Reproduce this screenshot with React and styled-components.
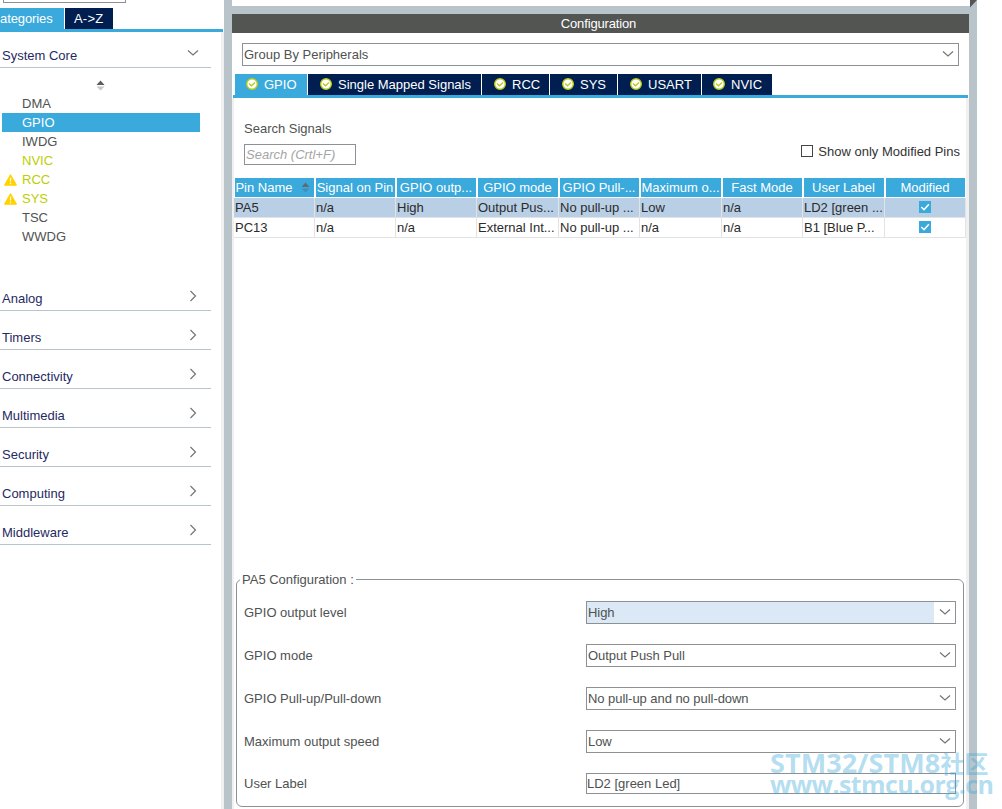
import React, { useState } from "react";
import styled, { createGlobalStyle } from "styled-components";

const items = [
  { name: "DMA" },
  { name: "GPIO" },
  { name: "IWDG" },
  { name: "NVIC", used: true },
  { name: "RCC", used: true, warn: true },
  { name: "SYS", used: true, warn: true },
  { name: "TSC" },
  { name: "WWDG" },
];

const groups = [
  "Analog",
  "Timers",
  "Connectivity",
  "Multimedia",
  "Security",
  "Computing",
  "Middleware",
];

const tabs = [
  { name: "GPIO", width: 72, pad: 11 },
  { name: "Single Mapped Signals", width: 173, pad: 12 },
  { name: "RCC", width: 67, pad: 12 },
  { name: "SYS", width: 67, pad: 12 },
  { name: "USART", width: 83, pad: 12 },
  { name: "NVIC", width: 70, pad: 11 },
];

const columns = [
  "Pin Name",
  "Signal on Pin",
  "GPIO outp...",
  "GPIO mode",
  "GPIO Pull-...",
  "Maximum o...",
  "Fast Mode",
  "User Label",
  "Modified",
];

const pins = [
  ["PA5", "n/a", "High", "Output Pus...", "No pull-up ...", "Low", "n/a", "LD2 [green ..."],
  ["PC13", "n/a", "n/a", "External Int...", "No pull-up ...", "n/a", "n/a", "B1 [Blue P..."],
];

const fields = [
  { label: "GPIO output level", value: "High", active: true },
  { label: "GPIO mode", value: "Output Push Pull" },
  { label: "GPIO Pull-up/Pull-down", value: "No pull-up and no pull-down" },
  { label: "Maximum output speed", value: "Low" },
];

const ChevronDown = () => (
  <svg width="12" height="8" viewBox="0 0 12 8">
    <path d="M1 1.5 L6 6 L11 1.5" fill="none" stroke="#757575" strokeWidth="1.2" />
  </svg>
);

const ChevronRight = () => (
  <svg width="8" height="12" viewBox="0 0 8 12">
    <path d="M1.5 1 L6.5 6 L1.5 11" fill="none" stroke="#757575" strokeWidth="1.2" />
  </svg>
);

const SortIcon = ({ up = "#5c5c5c", down = "#c8c8c8" }) => (
  <svg width="9" height="11" viewBox="0 0 9 11">
    <path d="M0.5 5 L4.5 0.5 L8.5 5 Z" fill={up} />
    <path d="M0.5 6.5 L4.5 10.5 L8.5 6.5 Z" fill={down} />
  </svg>
);

const WarnIcon = () => (
  <svg width="14" height="12" viewBox="0 0 14 12">
    <path
      d="M6.5 1 L12.2 11 H0.8 Z"
      fill="#ffd200"
      stroke="#ffd200"
      strokeWidth="1.4"
      strokeLinejoin="round"
    />
    <path d="M6.5 3.8 V7.6 M6.5 8.8 V10.2" stroke="#fff" strokeWidth="1.2" />
  </svg>
);

const OkIcon = () => (
  <svg width="12" height="12" viewBox="0 0 12 12">
    <circle cx="6" cy="6" r="5.3" fill="#fff" stroke="#b9cb1c" strokeWidth="1.4" />
    <path d="M3 5.4 L5.5 7.8 L9 4.6" fill="none" stroke="#b9cb1c" strokeWidth="1.4" />
  </svg>
);

const Tick = () => (
  <svg width="12" height="12" viewBox="0 0 12 12">
    <path d="M2.3 6 L5 8.7 L9.9 3.3" fill="none" stroke="#fff" strokeWidth="1.6" />
  </svg>
);

const App = () => {
  const [selected, setSelected] = useState("GPIO");
  const [tab, setTab] = useState("GPIO");

  return (
    <>
      <GlobalStyle />
      <StPage>
        <Sidebar>
          <TopInput />
          <SideTabs>
            <SideTab $active $width={64}>ategories</SideTab>
            <SideTab $width={48}>A-&gt;Z</SideTab>
          </SideTabs>
          <SideBody>
            <GroupHead $first>
              System Core
              <ChevronDown />
            </GroupHead>
            <SortWrap>
              <SortIcon />
            </SortWrap>
            <ItemList>
              {items.map((it) => (
                <Item
                  key={it.name}
                  $used={it.used}
                  $selected={it.name === selected}
                  onClick={() => setSelected(it.name)}
                >
                  <ItemIcon>{it.warn && <WarnIcon />}</ItemIcon>
                  {it.name}
                </Item>
              ))}
            </ItemList>
            {groups.map((g) => (
              <GroupHead key={g}>
                {g}
                <ChevronRight />
              </GroupHead>
            ))}
          </SideBody>
        </Sidebar>

        <Frame>
          <FrameTop />
          <FrameBar>
            <svg width="7" height="8" viewBox="0 0 7 8">
              <path d="M0 0 H7 L0 7.5 Z" fill="#525552" />
            </svg>
          </FrameBar>
          <Panel>
            <Title>Configuration</Title>
            <GroupBy>
              Group By Peripherals
              <ChevronDown />
            </GroupBy>
            <Tabs>
              {tabs.map((t) => (
                <Tab
                  key={t.name}
                  $width={t.width}
                  $pad={t.pad}
                  $active={t.name === tab}
                  onClick={() => setTab(t.name)}
                >
                  <OkIcon />
                  {t.name}
                </Tab>
              ))}
            </Tabs>
            <Content>
              <SearchLabel>Search Signals</SearchLabel>
              <SearchRow>
                <SearchInput placeholder="Search (Crtl+F)" />
                <CheckLabel>
                  <EmptyBox />
                  Show only Modified Pins
                </CheckLabel>
              </SearchRow>
              <Table>
                {columns.map((c, i) => (
                  <HeadCell key={c} $sorted={i === 0}>
                    {c}
                    {i === 0 && <SortIcon up="#5f6c74" down="#3f8fb8" />}
                  </HeadCell>
                ))}
                {pins.map((row, r) => (
                  <React.Fragment key={row[0]}>
                    {row.map((v, i) => (
                      <Cell key={i} $selected={r === 0}>{v}</Cell>
                    ))}
                    <Cell $selected={r === 0} $center>
                      <CheckedBox>
                        <Tick />
                      </CheckedBox>
                    </Cell>
                  </React.Fragment>
                ))}
              </Table>
              <Config>
                <Legend>PA5 Configuration :</Legend>
                {fields.map((f) => (
                  <Field key={f.label}>
                    {f.label}
                    <Combo>
                      <ComboValue $active={f.active}>{f.value}</ComboValue>
                      <ComboArrow>
                        <ChevronDown />
                      </ComboArrow>
                    </Combo>
                  </Field>
                ))}
                <Field>
                  User Label
                  <TextInput defaultValue="LD2 [green Led]" />
                </Field>
              </Config>
            </Content>
          </Panel>
        </Frame>

        <Watermark>
          <MarkTop>
            STM32/STM8<MarkCjk>社区</MarkCjk>
          </MarkTop>
          <MarkUrl>www.stmcu.org.cn</MarkUrl>
        </Watermark>
      </StPage>
    </>
  );
};

export default App;

const GlobalStyle = createGlobalStyle`
  * {
    box-sizing: border-box;
  }
  body {
    margin: 0;
    background: #fff;
    overflow: hidden;
  }
  body, input {
    font-family: "Liberation Sans", Arial, sans-serif;
    font-size: 13px;
  }
  svg {
    display: block;
    flex-shrink: 0;
  }
`;

const StPage = styled.div`
  position: relative;
  display: flex;
  width: 1002px;
  height: 809px;
  overflow: hidden;
  color: #4f5251;
`;

const Sidebar = styled.aside`
  width: 224px;
  display: flex;
  flex-direction: column;
`;

const TopInput = styled.div`
  width: 123px;
  height: 3px;
  margin: 0 0 5px 3px;
  border: 1px solid #8c9196;
  border-top: none;
`;

const SideTabs = styled.div`
  display: flex;
  gap: 1px;
  height: 24px;
  width: 223px;
  border-bottom: 3px solid #3aa9dc;
`;

const SideTab = styled.div`
  width: ${(props) => props.$width}px;
  height: 21px;
  line-height: 21px;
  padding-left: ${(props) => (props.$active ? 0 : 9)}px;
  letter-spacing: ${(props) => (props.$active ? -0.1 : 0.2)}px;
  color: #fff;
  background: ${(props) => (props.$active ? "#3aa9dc" : "#001e50")};
`;

const SideBody = styled.div`
  flex: 1;
  border-right: 3px solid #f0f0f0;
`;

const GroupHead = styled.div`
  display: flex;
  justify-content: space-between;
  align-items: center;
  width: 211px;
  height: ${(props) => (props.$first ? 36 : 39)}px;
  padding: ${(props) => (props.$first ? "11px 12px 0 2px" : "14px 14px 0 2px")};
  border-bottom: 1px solid #b8c4ca;
  color: #1f2a63;

  svg {
    margin-top: ${(props) => (props.$first ? -4 : -4)}px;
  }
`;

const SortWrap = styled.div`
  display: flex;
  justify-content: center;
  width: 201px;
  height: 26px;
  padding-top: 12px;
`;

const ItemList = styled.div`
  margin-bottom: 26px;
`;

const Item = styled.div`
  display: flex;
  align-items: center;
  width: 198px;
  height: 19px;
  margin-left: 2px;
  padding-bottom: 1px;
  cursor: pointer;
  color: ${(props) =>
    props.$selected ? "#fff" : props.$used ? "#bccf00" : "#4f5251"};
  background: ${(props) => (props.$selected ? "#3aa9dc" : "transparent")};
`;

const ItemIcon = styled.span`
  width: 20px;
  padding: 2px 0 0 2px;
`;

const Frame = styled.main`
  display: flex;
  flex-direction: column;
  width: 753px;
  background: #b8c4ca;
`;

const FrameTop = styled.div`
  height: 6px;
  margin: 0 7px 0 8px;
  background: #fff;
`;

const FrameBar = styled.div`
  display: flex;
  justify-content: flex-end;
  height: 8px;

  svg {
    margin-top: -6px;
  }
`;

const Panel = styled.section`
  flex: 1;
  display: flex;
  flex-direction: column;
  margin: 0 8px;
  background: #fff;
`;

const Title = styled.div`
  height: 19px;
  line-height: 19px;
  padding-right: 4px;
  text-align: center;
  letter-spacing: -0.15px;
  color: #fff;
  background: #525552;
`;

const GroupBy = styled.div`
  display: flex;
  justify-content: space-between;
  align-items: center;
  width: 717px;
  height: 23px;
  margin: 10px 0 8px 10px;
  padding: 0 4px 0 1px;
  border: 1px solid #8c9196;

  svg {
    margin-top: -1px;
  }
`;

const Tabs = styled.div`
  display: flex;
  gap: 1px;
  height: 24px;
  margin: 0 1px;
  padding-left: 2px;
  border-bottom: 3px solid #3aa9dc;
`;

const Tab = styled.div`
  display: flex;
  align-items: center;
  gap: 6px;
  width: ${(props) => props.$width}px;
  height: 21px;
  padding-left: ${(props) => props.$pad}px;
  white-space: nowrap;
  cursor: pointer;
  color: #fff;
  background: ${(props) => (props.$active ? "#3aa9dc" : "#001e50")};

  svg {
    margin-top: -1px;
  }
`;

const Content = styled.div`
  flex: 1;
  display: flex;
  flex-direction: column;
  border-left: 2px solid #f0f0f0;
  border-right: 3px solid #f0f0f0;
`;

const SearchLabel = styled.div`
  height: 16px;
  margin: 23px 0 7px 10px;
`;

const SearchRow = styled.div`
  display: flex;
  justify-content: space-between;
  align-items: flex-start;
  height: 34px;
  padding: 0 6px 0 10px;
`;

const SearchInput = styled.input`
  width: 112px;
  height: 21px;
  padding: 0 1px;
  border: 1px solid #8c9196;
  outline: none;
  font-style: italic;

  &::placeholder {
    color: #a5a5a5;
  }
`;

const CheckLabel = styled.label`
  display: flex;
  align-items: center;
  gap: 5px;
  height: 15px;
  color: #333;
`;

const EmptyBox = styled.span`
  width: 12px;
  height: 12px;
  margin-top: -1px;
  border: 1px solid #444;
`;

const Table = styled.div`
  display: grid;
  grid-template-columns: 81px 81px 81px 82px 81px 82px 81px 82px 81px;
  grid-template-rows: 20px 20px 20px;
`;

const HeadCell = styled.div`
  display: flex;
  align-items: center;
  justify-content: center;
  gap: 8px;
  height: 19px;
  margin: 0 1px;
  padding-right: ${(props) => (props.$sorted ? 4 : 1)}px;
  overflow: hidden;
  white-space: nowrap;
  color: #fff;
  background: #3aa9dc;

  svg {
    margin-top: -1px;
  }
`;

const Cell = styled.div`
  display: flex;
  align-items: center;
  justify-content: ${(props) => (props.$center ? "center" : "flex-start")};
  padding: ${(props) => (props.$center ? "0 1px 2px 0" : "0 0 0 1px")};
  overflow: hidden;
  white-space: nowrap;
  color: #2b2b2b;
  border-right: 1px solid #e1e3e4;
  border-bottom: 1px solid #e1e3e4;
  background: ${(props) => (props.$selected ? "#b8cfe5" : "#fff")};
`;

const CheckedBox = styled.span`
  width: 12px;
  height: 12px;
  background: #3aa9dc;
`;

const Config = styled.fieldset`
  width: 728px;
  height: 236px;
  margin: auto 0 2px 2px;
  padding: 13px 7px 0;
  border: 1px solid #8c9196;
  border-radius: 6px;
`;

const Legend = styled.legend`
  height: 17px;
  line-height: 17px;
  margin-left: -4px;
  padding: 0 2px;
`;

const Field = styled.div`
  display: flex;
  align-items: center;
  justify-content: space-between;
  width: 712px;
  height: 23px;
  margin-bottom: 20px;

  &:last-child {
    height: 21px;
    margin: 0;
  }
`;

const Combo = styled.div`
  display: flex;
  width: 370px;
  height: 23px;
  border: 1px solid #8c9196;
`;

const ComboValue = styled.div`
  flex: 1;
  padding-left: 1px;
  line-height: 21px;
  letter-spacing: -0.05px;
  background: ${(props) => (props.$active ? "#dae9f5" : "#fff")};
`;

const ComboArrow = styled.div`
  display: flex;
  align-items: center;
  justify-content: center;
  width: 21px;
  padding-bottom: 1px;
`;

const TextInput = styled.input`
  width: 370px;
  height: 21px;
  padding: 0;
  border: 1px solid #8c9196;
  outline: none;
  color: #4f5251;
`;

const Watermark = styled.div`
  position: absolute;
  left: 770px;
  top: 753px;
  font-family: "Open Sans", "Noto Sans CJK SC", sans-serif;
  font-weight: bold;
  white-space: nowrap;
  color: rgba(58, 169, 220, 0.4);
  pointer-events: none;
`;

const MarkTop = styled.div`
  height: 20px;
  line-height: 20px;
  font-size: 27px;
  letter-spacing: 0.1px;
`;

const MarkCjk = styled.span`
  font-size: 24px;
  letter-spacing: 0;
`;

const MarkUrl = styled.div`
  height: 22px;
  line-height: 22px;
  font-size: 25px;
  letter-spacing: -0.6px;
`;
